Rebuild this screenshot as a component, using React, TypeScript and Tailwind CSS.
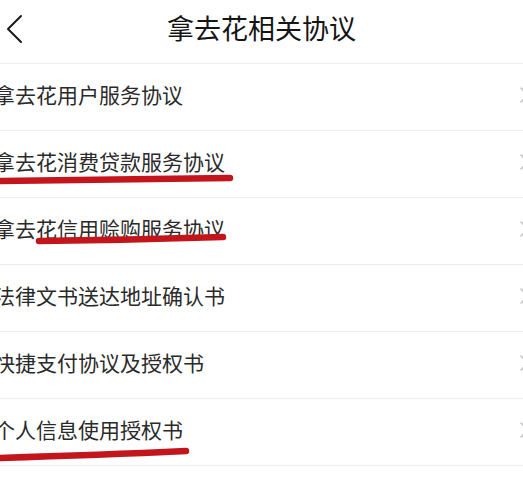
import React from "react";

const items = [
  "拿去花用户服务协议",
  "拿去花消费贷款服务协议",
  "拿去花信用赊购服务协议",
  "法律文书送达地址确认书",
  "快捷支付协议及授权书",
  "个人信息使用授权书",
];

const cjk = { fontFamily: '"Noto Sans CJK SC", "Noto Sans", sans-serif' };

function RowChevron() {
  return (
    <svg width="12" height="18" viewBox="0 0 12 18" className="ml-auto mr-[-8px] shrink-0">
      <path d="M2 2 L9 9 L2 16" fill="none" stroke="#c4c4c4" strokeWidth="1.6" strokeLinecap="round" strokeLinejoin="round" />
    </svg>
  );
}

export default function App() {
  return (
    <div className="relative w-[523px] h-[481px] overflow-hidden bg-white" style={cjk}>
      {/* top bar */}
      <div className="relative h-[64px] flex items-center justify-center pb-[8px] border-b border-[#eeeeee]">
        <svg width="20" height="30" viewBox="0 0 20 30" className="absolute left-[4px] top-[14px]">
          <path d="M17 2 L4 15 L17 28" fill="none" stroke="#1a1a1a" strokeWidth="2" strokeLinecap="round" strokeLinejoin="round" />
        </svg>
        <span className="text-[27px] leading-none text-[#151515]">拿去花相关协议</span>
      </div>

      {/* agreement list */}
      <div className="flex flex-col">
        {items.map((t) => (
          <div key={t} className="h-[67px] flex items-center pb-[5px] border-b border-[#ececec]">
            <span className="ml-[-6px] text-[21px] leading-none text-[#2a2a2a] whitespace-nowrap">{t}</span>
            <RowChevron />
          </div>
        ))}
      </div>

      {/* hand-drawn red marks */}
      <svg className="absolute left-0 top-0 pointer-events-none" width="523" height="481" viewBox="0 0 523 481">
        <path d="M-4 181 Q110 180 230 178" fill="none" stroke="#c3161c" strokeWidth="6.5" strokeLinecap="round" />
        <path d="M39 241 Q130 240 223 237" fill="none" stroke="#c3161c" strokeWidth="6.5" strokeLinecap="round" />
        <path d="M-4 458 Q100 455 186 451" fill="none" stroke="#c3161c" strokeWidth="6.5" strokeLinecap="round" />
      </svg>
    </div>
  );
}
